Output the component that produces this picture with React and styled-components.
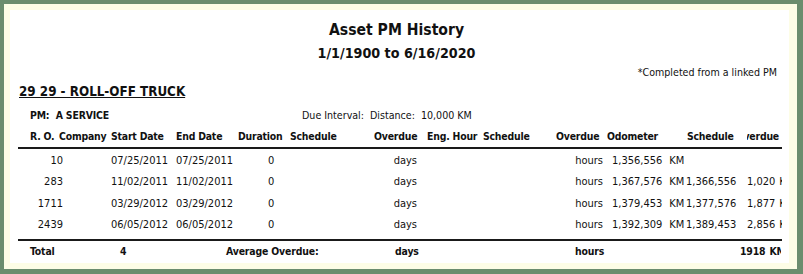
import React from 'react'
import styled, { createGlobalStyle } from 'styled-components'

const GlobalStyle = createGlobalStyle`
  html, body {
    margin: 0;
    padding: 0;
    background: #6b8d6e;
  }
  body {
    font-family: "DejaVu Sans Condensed", "Liberation Sans", sans-serif;
    color: #111;
  }
`

const cols = '46px 47px 65px 62px 52px 84px 51px 58px 73px 50px 80px 61px 35px'
const totalCols = '102px 106px 170px 179px 168px 38px'

const rows = [
  { ro: '10', start: '07/25/2011', end: '07/25/2011', odo: '1,356,556', sched: '', over: '' },
  { ro: '283', start: '11/02/2011', end: '11/02/2011', odo: '1,367,576', sched: '1,366,556', over: '1,020' },
  { ro: '1711', start: '03/29/2012', end: '03/29/2012', odo: '1,379,453', sched: '1,377,576', over: '1,877' },
  { ro: '2439', start: '06/05/2012', end: '06/05/2012', odo: '1,392,309', sched: '1,389,453', over: '2,856' },
]

const App = () => {
  return (
    <>
      <GlobalStyle />
      <Frame>
        <Page>
          <Title>Asset PM History</Title>
          <DateRange>1/1/1900 to 6/16/2020</DateRange>
          <Note>*Completed from a linked PM</Note>
          <AssetName>29 29 - ROLL-OFF TRUCK</AssetName>
          <PmLine>
            <PmName>PM:  A SERVICE</PmName>
            <span>Due Interval:  Distance:  10,000 KM</span>
          </PmLine>

          <HeaderRow>
            <Cell $pl={12}>R. O.</Cell>
            <Cell $ml={-5}>Company</Cell>
            <Cell>Start Date</Cell>
            <Cell>End Date</Cell>
            <Cell>Duration</Cell>
            <Cell>Schedule</Cell>
            <Cell>Overdue</Cell>
            <Cell $pl={2}>Eng. Hour</Cell>
            <Cell>Schedule</Cell>
            <Cell>Overdue</Cell>
            <Cell $pl={1}>Odometer</Cell>
            <Cell $pl={1}>Schedule</Cell>
            <ClipCell $end $pr={3}>Overdue</ClipCell>
          </HeaderRow>

          <Body>
            {rows.map((r) => (
              <Row key={r.ro}>
                <Cell $align="right" $pr={1}>{r.ro}</Cell>
                <Cell />
                <Cell>{r.start}</Cell>
                <Cell>{r.end}</Cell>
                <Cell $pl={30}>0</Cell>
                <Cell />
                <Cell $align="right" $pr={8}>days</Cell>
                <Cell />
                <Cell />
                <Cell $align="right" $pr={3}>hours</Cell>
                <Cell $pl={6}>{r.odo}<Unit>KM</Unit></Cell>
                <Cell>{r.sched}</Cell>
                <ClipCell>{r.over && <>{r.over}<Unit $gap={4}>KM</Unit></>}</ClipCell>
              </Row>
            ))}
          </Body>

          <TotalRow>
            <Cell $pl={12}>Total</Cell>
            <Cell>4</Cell>
            <Cell>Average Overdue:</Cell>
            <Cell $pl={-1}>days</Cell>
            <Cell>hours</Cell>
            <ClipCell $pl={-3}>1918<Unit $gap={4}>KM</Unit></ClipCell>
          </TotalRow>
        </Page>
      </Frame>
    </>
  )
}

export default App

const Frame = styled.div`
  margin: 4px 6px 0 4px;
  padding: 6px 8px 6px 6px;
  background: #fdfde6;
`

const Page = styled.div`
  box-sizing: border-box;
  width: 779px;
  height: 253px;
  overflow: hidden;
  background: #fff;
  padding: 10px 7px 0 8px;
`

const Title = styled.div`
  font-size: 15.6px;
  line-height: 20px;
  font-weight: bold;
  text-align: center;
  padding-right: 7px;
`

const DateRange = styled.div`
  margin-top: 4px;
  font-size: 14.2px;
  line-height: 18px;
  font-weight: bold;
  text-align: center;
  padding-right: 7px;
`

const Note = styled.div`
  margin-top: 3px;
  font-size: 10.6px;
  line-height: 14px;
  text-align: right;
  padding-right: 5px;
`

const AssetName = styled.div`
  margin-top: 5px;
  padding-left: 1px;
  font-size: 13.3px;
  line-height: 16px;
  font-weight: bold;
  text-decoration: underline;
`

const PmLine = styled.div`
  margin-top: 8px;
  padding-left: 12px;
  display: flex;
  font-size: 10.6px;
  line-height: 14px;
  white-space: pre;
`

const PmName = styled.span`
  width: 272px;
  font-weight: bold;
  font-size: 10.4px;
  letter-spacing: -0.15px;
`

const Grid = styled.div`
  display: grid;
  grid-template-columns: ${cols};
  font-size: 11px;
  white-space: nowrap;
`

const HeaderRow = styled(Grid)`
  margin-top: 7px;
  line-height: 14px;
  font-weight: bold;
  font-size: 10.4px;
  letter-spacing: -0.2px;
  padding-bottom: 4px;
  border-bottom: 2px solid #1a1a1a;
`

const Body = styled.div`
  padding-top: 1px;
  padding-bottom: 3px;
  border-bottom: 2px solid #1a1a1a;
`

const Row = styled(Grid)`
  height: 21.4px;
  line-height: 21.4px;
`

const TotalRow = styled(Grid)`
  grid-template-columns: ${totalCols};
  margin-top: 3px;
  line-height: 14px;
  font-weight: bold;
  font-size: 10.4px;
  letter-spacing: -0.15px;
`

const Cell = styled.div`
  text-align: ${(p) => p.$align || 'left'};
  padding-left: ${(p) => Math.max(p.$pl || 0, 0)}px;
  padding-right: ${(p) => p.$pr || 0}px;
  margin-left: ${(p) => (p.$ml || 0) + Math.min(p.$pl || 0, 0)}px;
`

const ClipCell = styled.div`
  display: flex;
  justify-content: ${(p) => (p.$end ? 'flex-end' : 'flex-start')};
  overflow: hidden;
  padding-right: ${(p) => p.$pr || 0}px;
  margin-left: ${(p) => p.$pl || 0}px;
`

const Unit = styled.span`
  margin-left: ${(p) => p.$gap ?? 7}px;
`
